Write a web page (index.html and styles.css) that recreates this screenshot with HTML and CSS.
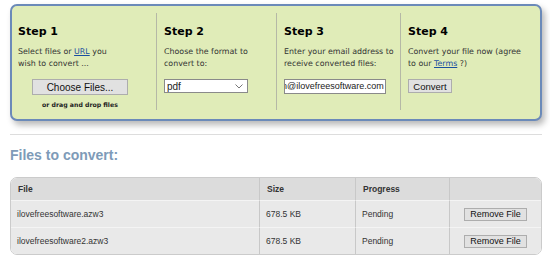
FILE: index.html
```html
<!DOCTYPE html>
<html lang="en">
<head>
  <meta charset="UTF-8" />
  <title>Convert files</title>
  <link rel="stylesheet" href="styles.css">
</head>
<body>

<div class="page">
  <div class="steps">
    <div class="step s1">
      <h2>Step 1</h2>
      <p>Select files or <a href="#">URL</a> you wish to convert ...</p>
      <button class="btn choose">Choose Files...</button>
      <div class="drag">or drag and drop files</div>
    </div>
    <div class="step s2">
      <h2>Step 2</h2>
      <p>Choose the format to convert to:</p>
      <div class="select">
        <span>pdf</span>
        <svg width="8" height="5" viewBox="0 0 8 5"><path d="M0.5 0.5 L4 4 L7.5 0.5" fill="none" stroke="#777" stroke-width="1"/></svg>
      </div>
    </div>
    <div class="step s3">
      <h2>Step 3</h2>
      <p>Enter your email address to receive converted files:</p>
      <div class="email"><span>n@ilovefreesoftware.com</span></div>
    </div>
    <div class="step s4">
      <h2>Step 4</h2>
      <p>Convert your file now (agree to our <a href="#">Terms</a> ?)</p>
      <button class="btn convert">Convert</button>
    </div>
  </div>

  <hr class="line">

  <h3 class="files-title">Files to convert:</h3>

  <table class="files">
    <thead>
      <tr><th class="c-file">File</th><th class="c-size">Size</th><th class="c-prog">Progress</th><th></th></tr>
    </thead>
    <tbody>
      <tr><td>ilovefreesoftware.azw3</td><td>678.5 KB</td><td>Pending</td><td class="act"><button class="btn remove">Remove File</button></td></tr>
      <tr><td>ilovefreesoftware2.azw3</td><td>678.5 KB</td><td>Pending</td><td class="act"><button class="btn remove">Remove File</button></td></tr>
    </tbody>
  </table>
</div>

</body>
</html>
```

FILE: styles.css
```css
body {
  margin: 0;
  background: #fff;
  font-family: 'DejaVu Sans', sans-serif;
  color: #222;
}

.page {
  padding: 4px 8px 0 10px;
}

/* Panel de pasos */
.steps {
  display: grid;
  grid-template-columns: 144px 120px 124px 1fr;
  background: #e0ecb8;
  border: 2px solid #6b8ab9;
  border-radius: 7px;
  box-shadow: 3px 4px 6px rgba(0,0,0,0.28);
  padding: 7px 0 9px;
  height: 97px;
}

.step {
  padding: 11px 0 0 7px;
}

.step.s1 {
  padding: 11px 14px 0 6px;
}

.step + .step {
  border-left: 1px solid #b5b8a6;
}

.step h2 {
  margin: 0 0 7px;
  font-size: 11px;
  line-height: 15px;
  font-weight: bold;
  color: #000;
}

.step p {
  margin: 0 0 9px;
  font-size: 7.9px;
  line-height: 12px;
  color: #333;
}

.s1 p { max-width: 100px; }
.s2 p { max-width: 106px; }
.s3 p { max-width: 116px; }
.s4 p { max-width: 120px; }

.step a {
  color: #1a4fa0;
}

.btn {
  display: block;
  font-family: 'Liberation Sans', sans-serif;
  background: #e1e1e1;
  border: 1px solid #adadad;
  color: #111;
  padding: 0;
  cursor: pointer;
}

.choose {
  width: 96px;
  height: 16px;
  margin: 0 auto;
  font-size: 10px;
}

.drag {
  text-align: center;
  font-size: 6.2px;
  font-weight: bold;
  margin-top: 6px;
}

.select {
  display: flex;
  align-items: center;
  justify-content: space-between;
  width: 84px;
  height: 14px;
  box-sizing: border-box;
  background: #fff;
  border: 1px solid #8a8a8a;
  padding: 0 4px 0 2px;
  font-family: 'Liberation Sans', sans-serif;
  font-size: 10px;
}

.email {
  width: 102px;
  height: 15px;
  box-sizing: border-box;
  background: #fff;
  border: 1px solid #8a8a8a;
  overflow: hidden;
  white-space: nowrap;
  font-family: 'Liberation Sans', sans-serif;
  font-size: 9px;
  line-height: 13px;
}

.email span {
  display: inline-block;
  margin-left: -3px;
}

.convert {
  width: 44px;
  height: 14px;
  font-size: 9.5px;
  margin-top: 2px;
}

.line {
  border: none;
  border-top: 1px solid #ddd;
  margin: 13px 0 0;
}

.files-title {
  margin: 12px 0 14px;
  font-family: 'Liberation Sans', sans-serif;
  font-size: 14px;
  line-height: 16px;
  color: #7e9bb8;
}

/* Tabla de archivos */
.files {
  width: 100%;
  border-collapse: separate;
  border-spacing: 0;
  border: 1px solid #cbcbcb;
  border-radius: 7px;
  overflow: hidden;
  font-family: 'Liberation Sans', sans-serif;
  font-size: 8.5px;
  color: #333;
}

.files th {
  background: #dcdcdc;
  text-align: left;
  font-weight: bold;
  height: 22px;
  padding: 0 6px 0 7px;
}

.files td {
  background: #e9e9e9;
  height: 26px;
  padding: 0 6px;
  border-top: 1px solid #f4f4f4;
}

.files th + th,
.files td + td {
  border-left: 1px solid #c8c8c8;
}

.c-file { width: 235px; }
.c-size { width: 82px; }
.c-prog { width: 80px; }

.files .act {
  text-align: right;
  padding-right: 14px;
}

.remove {
  display: inline-block;
  width: 63px;
  height: 13px;
  font-size: 9px;
}
```
